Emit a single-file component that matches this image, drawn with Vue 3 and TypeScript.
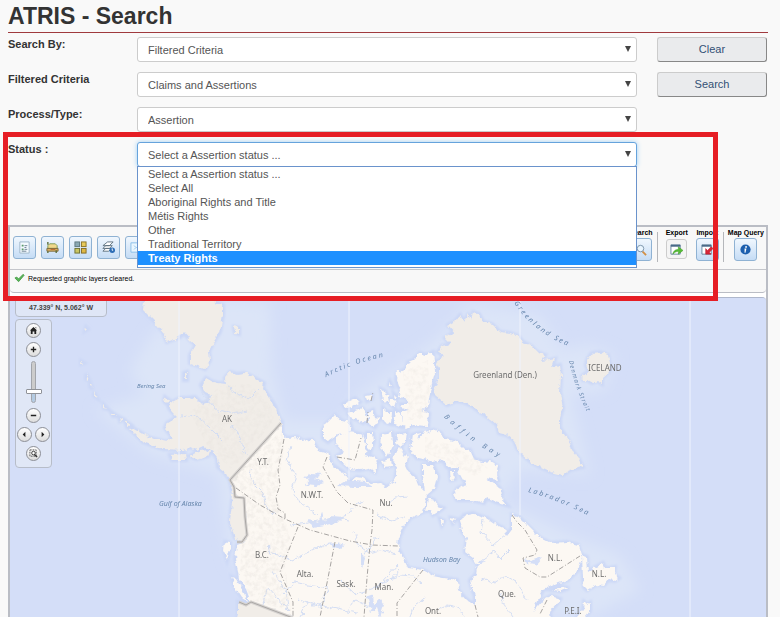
<script setup lang="ts">
import { ref } from 'vue'

const searchBy = ref('Filtered Criteria')
const criteria = ref('Claims and Assertions')
const processType = ref('Assertion')
const status = ref('Select a Assertion status ...')
const highlighted = ref('Treaty Rights')
const zoomLevel = ref(22)

const statuses: string[] = [
  'Select a Assertion status ...',
  'Select All',
  'Aboriginal Rights and Title',
  'Métis Rights',
  'Other',
  'Traditional Territory',
  'Treaty Rights',
]

interface Place { name: string; x: number; y: number }

const places: Place[] = [
  { name: 'AK', x: 227, y: 422 },
  { name: 'Y.T.', x: 263, y: 465 },
  { name: 'N.W.T.', x: 312, y: 498 },
  { name: 'Nu.', x: 386, y: 506 },
  { name: 'B.C.', x: 262, y: 558 },
  { name: 'Alta.', x: 305, y: 577 },
  { name: 'Sask.', x: 346, y: 587 },
  { name: 'Man.', x: 384, y: 590 },
  { name: 'Ont.', x: 433, y: 614 },
  { name: 'Que.', x: 507, y: 597 },
  { name: 'N.L.', x: 555, y: 561 },
  { name: 'N.L.', x: 599, y: 577 },
  { name: 'P.E.I.', x: 573, y: 614 },
  { name: 'Greenland (Den.)', x: 505, y: 378 },
  { name: 'ICELAND', x: 605, y: 371 },
]

const foreignLand: string[] = [
  // Chukotka
  'M145 290L143 310L153 320L163 332L167 342L180 337L184 333L190 340L196 345L190 355L190 363L198 366L205 369L210 360L209 351L213 343L220 332L223 315L223 305L215 303L214 290Z',
  'M234 327L239 328L239 334L235 333Z',
  'M184 373L187 372L187 380L184 380Z',
  'M165 397L169 400L167 404L164 401Z',
  // Alaska with the peninsula
  'M282 424L278 415L275 406L268 395L263 388L264 383L253 377L244 373L237 374L230 372L225 378L226 384L218 383L213 382L206 378L201 385L205 393L210 395L208 402L202 404L195 397L187 398L180 398L170 403L169 408L172 412L177 417L167 423L165 428L168 432L173 438L167 442L150 438L133 428L130 429L143 442L154 446L163 449L183 450L190 447L197 450L203 447L210 449L217 458L218 467L225 473L230 480L233 495L232 502L230 522L235 538L245 542L247 535L244 498L236 497L233 482Z',
  'M170 455L185 454L186 460L172 460Z',
  'M190 456L199 451L210 450L208 456L196 459Z',
  'M125 421L131 425L127 427ZM119 417L123 419L120 421ZM111 412L117 416L113 416ZM104 405L108 409L104 408ZM94 392L97 398L94 396ZM90 384L93 389L90 387ZM86 374L89 380L86 379ZM81 361L84 363L81 364ZM86 327L88 329L85 331Z',
  // Greenland
  'M473 312L471 320L468 315L464 322L460 315L455 321L448 325L454 332L445 338L451 344L442 346L438 352L444 357L436 362L440 370L440 378L433 388L434 394L447 405L456 401L463 402L472 406L480 412L489 418L497 425L499 433L507 435L514 440L517 448L523 455L531 462L540 467L551 472L563 475L570 470L583 467L579 459L572 450L570 443L567 438L560 428L560 418L563 408L560 392L561 376L560 365L552 367L555 359L550 360L541 361L545 355L537 352L531 346L523 342L518 336L510 333L500 332L492 324L483 322L479 314Z',
  // Iceland
  'M600 352L608 355L610 364L609 372L602 378L602 384L597 381L592 383L587 380L583 380L582 376L586 373L589 372L586 365L588 358L592 353Z',
  // Northern United States
  'M238 602L246 605L251 602L293 617L300 630L234 630L238 615Z',
]

const canadaLand: string[] = [
  // Mainland around Hudson Bay
  'M282 424L282 434L287 438L297 437L303 441L312 440L318 450L328 453L332 465L343 472L350 482L357 477L363 478L371 484L380 483L387 487L395 482L397 468L393 460L395 452L400 447L407 458L405 466L408 472L415 477L418 485L425 492L423 475L423 465L433 465L438 477L435 488L427 495L423 512L417 515L410 518L403 528L399 538L398 548L403 558L408 568L423 570L433 576L443 578L457 580L458 590L467 600L475 605L475 596L472 588L470 580L476 574L478 565L473 558L465 552L467 538L462 531L460 520L464 515L473 513L480 516L487 518L497 525L503 528L507 535L512 528L512 515L520 518L527 525L540 538L550 543L567 542L578 545L582 558L578 570L568 580L556 584L543 590L538 600L533 612L543 600L551 596L560 599L556 605L550 612L552 630L293 630L293 617L249 602L249 596L246 588L239 580L238 572L235 558L237 545L245 542L247 535L244 498L236 497L230 480Z',
  'M225 542L230 543L230 549L227 560L224 550Z',
  'M232 577L236 579L240 586L246 597L248 602L242 598L235 587Z',
  // Arctic archipelago
  'M335 415L342 421L350 423L352 430L344 434L337 435L328 442L323 438L323 430L326 424Z',
  'M337 437L347 432L357 433L363 435L366 443L365 455L373 457L378 462L375 472L368 468L360 470L350 469L342 462L337 456L344 452L337 444Z',
  'M367 433L373 433L374 441L370 452L367 449Z',
  'M382 435L392 433L393 445L387 457L381 447Z',
  'M397 434L407 433L406 440L401 447L396 443Z',
  'M382 461L390 459L391 466L385 467Z',
  'M343 404L355 398L360 402L351 407L345 408Z',
  'M348 413L355 411L362 408L366 413L367 418L363 423L358 420L350 417Z',
  'M368 412L373 410L375 417L380 418L375 427L368 423Z',
  'M366 396L372 395L372 399L367 401ZM381 389L385 391L388 397L389 402L383 401ZM390 382L392 386L389 385ZM391 399L396 401L394 407L390 404ZM394 394L397 397L395 399Z',
  'M383 408L387 412L392 412L391 424L385 422L383 419Z',
  'M396 410L401 413L401 427L394 424Z',
  'M433 352L426 355L420 353L413 360L408 362L406 369L397 373L396 380L398 386L401 390L399 397L409 399L408 404L401 404L402 408L408 410L402 412L401 425L407 428L413 425L428 426L429 413L421 410L428 407L429 398L432 383L435 372L434 362Z',
  // Baffin Island
  'M412 435L420 433L418 440L423 434L433 430L441 433L443 438L457 442L465 450L470 450L474 459L483 462L490 461L498 467L496 474L498 480L486 478L498 486L502 492L501 498L507 505L496 502L487 498L484 503L472 500L457 500L454 494L458 488L467 485L463 479L457 468L447 467L443 460L433 462L424 459L417 458L410 450Z',
  'M450 471L454 471L455 479L451 480Z',
  'M428 498L434 500L437 506L443 508L438 512L433 515L431 510L426 511Z',
  'M440 519L444 521L442 525ZM451 518L456 519L453 523Z',
  // Newfoundland and the gulf islands
  'M582 555L587 557L588 572L594 568L603 563L605 568L610 568L615 567L614 574L619 578L615 581L608 580L604 585L597 584L587 590L584 587L583 578Z',
  'M553 590L560 587L569 588L561 591Z',
  'M571 624L583 610L584 602L587 605L590 603L590 611L581 622Z',
]

const lakes: string[] = [
  'M303 478L312 473L323 474L316 478L324 483L315 486L305 485L309 480Z',
  'M308 520L318 522L322 513L324 521L333 516L343 517L336 524L325 526L313 528Z',
  'M325 544L337 543L346 545L336 548Z',
  'M367 596L373 594L374 603L380 600L384 606L380 617L377 608L371 612Z',
  'M361 553L365 558L363 569L361 562Z',
  'M269 545L270 545L271 555L269 554Z',
  'M524 559L530 561L543 557L536 565L526 564Z',
  'M478 561L487 560L480 565Z',
  'M337 486L347 480L365 482L373 487L355 487Z',
]

const rivers: string[] = [
  'M291 446L287 460L296 475L292 490L300 503L318 515',
  'M290 525L308 523L330 518L349 521',
  'M268 545L270 552L292 560L315 549L326 544',
  'M253 468L249 473L255 485L263 493L266 506L274 515',
  'M333 523L349 513L356 505L363 502',
  'M283 594L294 582L308 585L328 588L320 607L298 600',
  'M340 580L355 594L378 587L398 565',
  'M272 570L285 590L289 611L278 598L268 587L262 607',
  'M378 537L365 553L361 563',
  'M380 583L400 575L413 576L422 584',
  'M354 532L359 546L369 553L381 550L397 554',
  'M483 520L481 532L493 545L506 535M480 561L495 550L500 559L510 549',
  'M480 578L494 583L505 576L516 582L527 600M500 593L505 606L513 617',
  'M202 391L215 409L233 414L247 411M181 417L195 415L207 425L223 441',
  'M230 426L237 430L244 451L251 457M226 385L239 395L250 398L259 389',
  'M399 570L390 580L376 588M438 610L448 605L457 607L465 617M410 617L413 606L425 598',
  'M348 610L355 600L369 607M300 617L308 602L332 608L358 613',
  'M387 505L395 498L410 497M376 514L391 520L405 517',
]

const boundaries: string[] = [
  'M284 439L282 450L278 470L280 485L276 497L278 509L285 513L285 519',
  'M236 488L260 505L285 519L310 530L350 541L372 545L398 546',
  'M327 457L323 467L337 492L348 503L373 510L372 530L370 545L367 578L364 617',
  'M335 542L327 583L320 617',
  'M298 527L286 557L280 572L293 602L293 617',
  'M423 570L397 603L397 617',
  'M475 605L478 617',
  'M512 515L517 522L525 530L537 550L535 555L523 558L525 568L540 577L547 577L580 556',
  'M337 457L355 460L361 438M367 423L368 412M371 401L373 392',
  'M547 600L540 614',
]
</script>

<template>
  <div class="page">
    <h1 class="title">ATRIS - Search</h1>

    <form class="criteria" @submit.prevent>
      <label for="search-by">Search By:</label>
      <div class="field">
        <select id="search-by" v-model="searchBy"><option>Filtered Criteria</option></select>
        <svg class="arrow" viewBox="0 0 6 6" aria-hidden="true"><path d="M0 0H6L3 6Z" /></svg>
      </div>
      <button type="reset" class="action">Clear</button>

      <label for="filtered">Filtered Criteria</label>
      <div class="field">
        <select id="filtered" v-model="criteria"><option>Claims and Assertions</option></select>
        <svg class="arrow" viewBox="0 0 6 6" aria-hidden="true"><path d="M0 0H6L3 6Z" /></svg>
      </div>
      <button type="submit" class="action">Search</button>

      <label for="process">Process/Type:</label>
      <div class="field">
        <select id="process" v-model="processType"><option>Assertion</option></select>
        <svg class="arrow" viewBox="0 0 6 6" aria-hidden="true"><path d="M0 0H6L3 6Z" /></svg>
      </div>
      <span></span>

      <label for="status">Status :</label>
      <div class="field">
        <select id="status" v-model="status" class="focused">
          <option v-for="item in statuses" :key="item">{{ item }}</option>
        </select>
        <svg class="arrow" viewBox="0 0 6 6" aria-hidden="true"><path d="M0 0H6L3 6Z" /></svg>
        <ul class="options" role="listbox">
          <li
            v-for="item in statuses"
            :key="item"
            role="option"
            :aria-selected="item === highlighted"
            :class="{ active: item === highlighted }"
            @mouseenter="highlighted = item"
            @click="status = item"
          >{{ item }}</li>
        </ul>
      </div>
      <span></span>
    </form>

    <section class="viewer">
      <div class="toolbar">
        <div class="tools">
          <button type="button" class="tool" aria-label="Legend">
            <svg viewBox="0 0 14 14"><path d="M2 1H12V13H2Z" fill="#f4faff" stroke="#9db4c8" /><path d="M4 4H6V6H4ZM4 8H6V10H4Z" fill="#5b9a6a" /><path d="M7 5H10M7 7H9M7 9H10M4 11H9" stroke="#6b8091" /></svg>
          </button>
          <button type="button" class="tool" aria-label="Base map">
            <svg viewBox="0 0 14 14"><path d="M2 5L4 3H10L12 5V8H2Z" fill="#f0d88c" stroke="#7d9a55" /><path d="M1 8H13V11H1Z" fill="#dcae62" stroke="#7a6a3c" /><path d="M2 1V4M11 10V13M2 11V13" stroke="#5d6e3b" stroke-width="1.500" /><path d="M5 9H10" stroke="#b7602b" /></svg>
          </button>
          <button type="button" class="tool" aria-label="Map gallery">
            <svg viewBox="0 0 14 14"><rect x="1" y="1" width="5" height="5" fill="#8aa8b3" stroke="#5f7880" /><rect x="8" y="1" width="5" height="5" fill="#e7c95a" stroke="#8b7427" /><rect x="1" y="8" width="5" height="5" fill="#c9c562" stroke="#6d7033" /><rect x="8" y="8" width="5" height="5" fill="#dfb844" stroke="#806925" /></svg>
          </button>
          <button type="button" class="tool" aria-label="Layers">
            <svg viewBox="0 0 14 14"><path d="M1 5L6 1H12L8 5ZM1 8L4 5H11L8 8ZM1 11L4 8H11L7 11Z" fill="#fff" stroke="#5e7180" /><circle cx="11" cy="10" r="3" fill="#2c6cb5" /><path d="M11 8V10H12" stroke="#fff" fill="none" /></svg>
          </button>
          <button type="button" class="tool" aria-label="Full extent">
            <svg viewBox="0 0 14 14"><path d="M1 2H13V12H1Z" fill="#eaf6ff" stroke="#87bde8" /><path d="M4 5L10 9M10 5L4 9" stroke="#a5d0f0" /></svg>
          </button>
        </div>

        <div class="groups">
          <div class="group">
            <span id="tool-search">Search</span>
            <button type="button" class="tool" aria-labelledby="tool-search">
              <svg viewBox="0 0 14 14"><path d="M9 9L13 13" stroke="#d28f45" stroke-width="2" /><circle cx="7" cy="6" r="3.500" fill="#eaf6ff" stroke="#7891a7" /></svg>
            </button>
          </div>
          <i class="divider"></i>
          <div class="group spread">
            <span id="tool-export">Export</span>
            <button type="button" class="tool plain" aria-labelledby="tool-export">
              <svg viewBox="0 0 14 14"><path d="M1 2H11V12H1Z" fill="#fff" stroke="#67859e" /><path d="M1 3H11" stroke="#496a88" stroke-width="2" /><path d="M3 12C4 8 6 7 9 7V4L14 8L9 12V9C7 9 5 10 3 12Z" fill="#55bd35" stroke="#36951f" stroke-width=".5" /></svg>
            </button>
          </div>
          <div class="group spread">
            <span id="tool-import">Import</span>
            <button type="button" class="tool" aria-labelledby="tool-import">
              <svg viewBox="0 0 14 14"><path d="M1 2H11V12H1Z" fill="#fff" stroke="#67859e" /><path d="M1 3H11" stroke="#496a88" stroke-width="2" /><path d="M5 6L5 12H11L9 10L13 6L11 4L7 8Z" fill="#d72638" stroke="#a91424" stroke-width=".5" /></svg>
            </button>
          </div>
          <i class="divider"></i>
          <div class="group">
            <span id="tool-query">Map Query</span>
            <button type="button" class="tool" aria-labelledby="tool-query">
              <svg viewBox="0 0 14 14"><circle cx="7" cy="7" r="5.500" fill="#1c5fae" /><circle cx="7.600" cy="4.200" r="1" fill="#fff" /><path d="M6 6H8L7 10.500H6Z" fill="#fff" /></svg>
            </button>
          </div>
        </div>
      </div>

      <p class="message">
        <svg viewBox="0 0 12 10" aria-hidden="true"><path d="M1 5L3 4L5 6L10 1L11 2L5 9Z" fill="#58b557" stroke="#4a9e4c" /></svg>
        Requested graphic layers cleared.
      </p>

      <div class="map">
        <svg class="canvas" viewBox="10 298 756 319" preserveAspectRatio="xMidYMin slice" role="img" aria-label="Map of Canada">
          <defs>
            <filter id="coast" x="-5%" y="-5%" width="110%" height="110%">
              <feTurbulence type="fractalNoise" baseFrequency="0.18" numOctaves="3" seed="4" />
              <feDisplacementMap in="SourceGraphic" scale="6" xChannelSelector="R" yChannelSelector="G" />
            </filter>
            <filter id="shelf" x="-10%" y="-10%" width="120%" height="120%"><feGaussianBlur stdDeviation="7" /></filter>
            <filter id="edge" x="-10%" y="-10%" width="120%" height="120%"><feGaussianBlur stdDeviation="1" /></filter>
            <filter id="relief" x="0" y="0" width="100%" height="100%">
              <feTurbulence type="fractalNoise" baseFrequency="0.22" numOctaves="3" seed="9" result="noise" />
              <feColorMatrix in="noise" values="0 0 0 0 .72  0 0 0 0 .68  0 0 0 0 .64  1.600 0 0 0 -.65" result="tint" />
              <feComposite in="tint" in2="SourceAlpha" operator="in" />
            </filter>
            <path id="arctic" d="M326 377Q356 362 388 356" />
            <path id="greenland-sea" d="M514 303Q535 335 576 349" />
            <path id="denmark" d="M569 361Q575 390 590 418" />
            <path id="baffin" d="M444 417Q466 440 506 461" />
            <path id="labrador" d="M528 492Q560 500 598 521" />
          </defs>
          <rect x="-500" y="298" width="2000" height="900" fill="#d4def8" />
          <g fill="#dce5f8" filter="url(#shelf)">
            <path d="M155 330L225 300L270 303L272 370L285 420L345 420L350 400L400 365L435 340L470 303L540 315L563 350L590 345L615 355L605 390L570 395L590 475L520 470L500 500L570 535L620 555L640 590L590 617L280 617L230 560L218 475L150 455L95 410L145 395L130 370Z" />
          </g>
          <g fill="none" stroke="#ccd8f6" stroke-width="4" filter="url(#edge)">
            <path v-for="d in foreignLand" :key="d" :d="d" />
            <path v-for="d in canadaLand" :key="d" :d="d" />
          </g>
          <g filter="url(#coast)">
            <g fill="#fcf8f3"><path v-for="d in canadaLand" :key="d" :d="d" /></g>
            <g fill="#f1ede8"><path v-for="d in foreignLand" :key="d" :d="d" /></g>
            <g fill="#d4def7"><path v-for="d in lakes" :key="d" :d="d" /></g>
            <g fill="none" stroke="#d4def4"><path v-for="d in rivers" :key="d" :d="d" /></g>
          </g>
          <g filter="url(#relief)" opacity=".5">
            <path d="M230 480L282 430L284 450L276 497L285 520L292 545L285 565L291 611L251 600L240 570L242 545L248 520L244 498Z" />
            <path d="M190 412L220 386L250 384L270 405L275 420L232 470L205 443Z" opacity=".6" />
            <path d="M403 372L428 360L430 400L425 420L408 420ZM425 437L455 446L488 468L475 476L425 452Z" opacity=".7" />
          </g>
          <path d="M179 298V617M349 298V480M520 298V515M690 298V617" stroke="#eff3fd" fill="none" />
          <g fill="none" stroke="#d6d3d1" stroke-width="3">
            <path d="M281 423L230 480L234 487L235 497L244 498L245 517L247 535L242 542L237 542M239 602L246 605L251 602L293 618" />
          </g>
          <path d="M281 423L230 480L234 487L235 497L244 498L245 517L247 535L242 542L237 542M239 602L246 605L251 602L293 618" fill="none" stroke="#aaa7a5" />
          <g class="boundary"><path v-for="d in boundaries" :key="d" :d="d" /></g>
          <g class="place">
            <text v-for="(p, i) in places" :key="i" :x="p.x" :y="p.y">{{ p.name }}</text>
          </g>
          <g class="water">
            <text x="137" y="388" class="small">Bering Sea</text>
            <text x="159" y="506">Gulf of Alaska</text>
            <text x="423" y="562">Hudson Bay</text>
          </g>
          <g class="water spaced">
            <text><textPath href="#arctic">Arctic Ocean</textPath></text>
            <text><textPath href="#greenland-sea">Greenland Sea</textPath></text>
            <text class="small tight"><textPath href="#denmark">Denmark Strait</textPath></text>
            <text class="wide"><textPath href="#baffin">Baffin Bay</textPath></text>
            <text><textPath href="#labrador">Labrador Sea</textPath></text>
          </g>
        </svg>

        <div class="overlay">
          <output class="coords">47.339° N, 5.062° W</output>
          <div class="navigator">
            <button type="button" class="round" aria-label="Home"><svg viewBox="0 0 10 10"><path d="M5 1L9 5H8V9H6V6H4V9H2V5H1ZM7 1H8V3Z" /></svg></button>
            <button type="button" class="round" aria-label="Zoom in"><svg viewBox="0 0 10 10"><path d="M2 5H8M5 2V8" fill="none" stroke="#222" stroke-width="1.500" /></svg></button>
            <input v-model="zoomLevel" type="range" min="0" max="100" aria-label="Zoom level" />
            <button type="button" class="round" aria-label="Zoom out"><svg viewBox="0 0 10 10"><path d="M2 5H8" fill="none" stroke="#222" stroke-width="1.500" /></svg></button>
            <div class="pair">
              <button type="button" class="round" aria-label="Previous extent"><svg viewBox="0 0 10 10"><path d="M6 2V8L3 5Z" /></svg></button>
              <button type="button" class="round" aria-label="Next extent"><svg viewBox="0 0 10 10"><path d="M4 2V8L7 5Z" /></svg></button>
            </div>
            <button type="button" class="round" aria-label="Zoom to area"><svg viewBox="0 0 10 10"><path d="M1 1H8V8H1Z" fill="none" stroke="#555" stroke-dasharray="2 1" /><circle cx="5" cy="4.500" r="2" fill="#fff" stroke="#333" /><path d="M6 6L9 9" stroke="#333" stroke-width="1.500" /></svg></button>
          </div>
        </div>
      </div>
    </section>

    <div class="callout" aria-hidden="true"></div>
  </div>
</template>

<style>
body {
  margin: 0;
  background: #f9f9f9;
}
</style>

<style scoped>
.page {
  position: relative;
  box-sizing: border-box;
  display: flex;
  flex-direction: column;
  height: 100vh;
  min-height: 480px;
  padding: 0 12px 0 8px;
  overflow: hidden;
  font-family: "Liberation Sans", Arial, sans-serif;
  font-size: 11px;
  color: #333;
}
.title {
  margin: 0;
  border-bottom: 1px solid #a03a3e;
  font-size: 23px;
  line-height: 32px;
}
.criteria {
  display: grid;
  grid-template-columns: 109px 1fr 110px;
  gap: 10px 20px;
  margin: 4px 1px 58px 0;
}
.criteria label {
  font-weight: bold;
  line-height: 14px;
  white-space: nowrap;
}
.field {
  position: relative;
}
select {
  display: block;
  box-sizing: border-box;
  width: 100%;
  height: 25px;
  padding: 0 20px 0 10px;
  border: 1px solid #ccc;
  border-radius: 3px;
  background: #fff;
  color: #555;
  font: inherit;
  appearance: none;
  outline: none;
}
select.focused {
  border-color: #66a3dc;
  box-shadow: 0 0 5px #9fd0f5;
}
.arrow {
  position: absolute;
  top: 9px;
  right: 6px;
  width: 6px;
  height: 6px;
  fill: #444;
  pointer-events: none;
}
.action {
  height: 25px;
  padding: 0 6px 1px;
  border: 1px solid #ccc;
  border-right-color: #888;
  border-bottom-color: #888;
  border-radius: 3px;
  background: #eaebed;
  color: #335075;
  font: inherit;
}
.options {
  position: absolute;
  z-index: 2;
  top: 100%;
  left: 0;
  right: 0;
  margin: -1px 0 0;
  padding: 0 0 2px;
  border: 1px solid #6a93cc;
  background: #fff;
  color: #555;
  list-style: none;
}
.options li {
  padding: 0 10px;
  line-height: 14px;
}
.options .active {
  background: #1e90ff;
  color: #fff;
  font-weight: bold;
}
.viewer {
  display: flex;
  flex: 1;
  flex-direction: column;
  min-height: 0;
  border: 2px solid #babdc5;
  border-bottom: 0;
  background: #fff;
}
.toolbar {
  display: flex;
  justify-content: space-between;
  box-sizing: border-box;
  height: 43px;
  padding: 0 2px 0 3px;
  border-bottom: 1px solid #c4c6cb;
  background: #f8f8f8;
}
.tools {
  display: flex;
  gap: 5px;
  padding-top: 9px;
}
.tool {
  display: flex;
  align-items: center;
  justify-content: center;
  box-sizing: border-box;
  width: 23px;
  height: 23px;
  padding: 0;
  border: 1px solid #8fb2d3;
  border-radius: 3px;
  background: linear-gradient(#f0f7fe, #c5dcf5);
}
.tool svg {
  width: 13px;
  height: 13px;
}
.tool.plain {
  height: 20px;
  width: 21px;
  margin-top: 1px;
  border-color: #ccc;
  background: #f4f4f4;
}
.groups {
  display: flex;
  gap: 4px;
}
.group {
  display: flex;
  flex-direction: column;
  align-items: center;
  padding-top: 1px;
  color: #000;
  font-size: 7px;
  font-weight: bold;
  line-height: 10px;
  white-space: nowrap;
}
.group.spread {
  margin-left: 4px;
}
.divider {
  width: 1px;
  height: 30px;
  margin-top: 5px;
  background: #b5b7bb;
}
.message {
  display: flex;
  align-items: center;
  gap: 3px;
  box-sizing: border-box;
  height: 23px;
  margin: 0 0 4px;
  padding: 0 4px 6px;
  border-bottom: 1px solid #babdc5;
  border-radius: 0 0 4px 4px;
  background: #f8f8f8;
  color: #000;
  font-size: 7px;
}
.message svg {
  width: 11px;
  height: 10px;
}
.map {
  position: relative;
  flex: 1;
  min-height: 0;
  border-top: 1px solid #aeb7cc;
  border-radius: 4px 4px 0 0;
  overflow: hidden;
  background: #d4def8;
}
.canvas {
  display: block;
  width: 100%;
  height: 100%;
}
.boundary {
  fill: none;
  stroke: #a6a3a1;
  stroke-dasharray: 5 2 1 2;
}
.place {
  fill: #6d6d6d;
  font-family: "Noto Sans", sans-serif;
  font-size: 8px;
  text-anchor: middle;
}
.water {
  fill: #6686ac;
  font-family: "Noto Sans", sans-serif;
  font-size: 7px;
  font-style: italic;
}
.water .small {
  font-size: 6px;
}
.spaced {
  letter-spacing: 2px;
}
.spaced .tight {
  letter-spacing: 1px;
}
.spaced .wide {
  letter-spacing: 4px;
}
.overlay {
  position: absolute;
  top: 0;
  left: 5px;
  display: flex;
  flex-direction: column;
  align-items: flex-start;
  gap: 2px;
}
.coords {
  box-sizing: border-box;
  width: 92px;
  padding: 4px 0 3px;
  border: 1px solid #b7bdc9;
  border-radius: 0 0 4px 4px;
  background: #dfe6f6;
  color: #444;
  font-size: 7px;
  font-weight: bold;
  line-height: 10px;
  text-align: center;
}
.navigator {
  display: flex;
  flex-direction: column;
  align-items: center;
  gap: 4px;
  box-sizing: border-box;
  width: 37px;
  padding: 3px 0 6px;
  border: 1px solid #b7bdc9;
  border-radius: 4px;
  background: #e0e7f6;
}
.round {
  display: flex;
  align-items: center;
  justify-content: center;
  box-sizing: border-box;
  width: 15px;
  height: 15px;
  padding: 0;
  border: 1px solid #8c8f96;
  border-radius: 50%;
  background: linear-gradient(#fff, #ddd);
}
.round svg {
  width: 9px;
  height: 9px;
  fill: #222;
}
.pair {
  display: flex;
  gap: 3px;
}
input[type="range"] {
  width: 16px;
  height: 42px;
  margin: 0 0 1px;
  appearance: none;
  background: none;
  direction: rtl;
  writing-mode: vertical-lr;
}
input[type="range"]::-webkit-slider-runnable-track {
  width: 5px;
  border: 1px solid #a2a5ab;
  border-radius: 3px;
  box-sizing: border-box;
  background: linear-gradient(#ccc 75%, #b4cbe2 75%);
}
input[type="range"]::-webkit-slider-thumb {
  box-sizing: border-box;
  width: 16px;
  height: 5px;
  margin-left: -6px;
  border: 1px solid #909399;
  border-radius: 1px;
  appearance: none;
  background: #fff;
}
.callout {
  position: absolute;
  z-index: 3;
  top: 132px;
  left: 3px;
  right: 62px;
  box-sizing: border-box;
  height: 169px;
  border: 5px solid #e61e25;
  pointer-events: none;
}
</style>
